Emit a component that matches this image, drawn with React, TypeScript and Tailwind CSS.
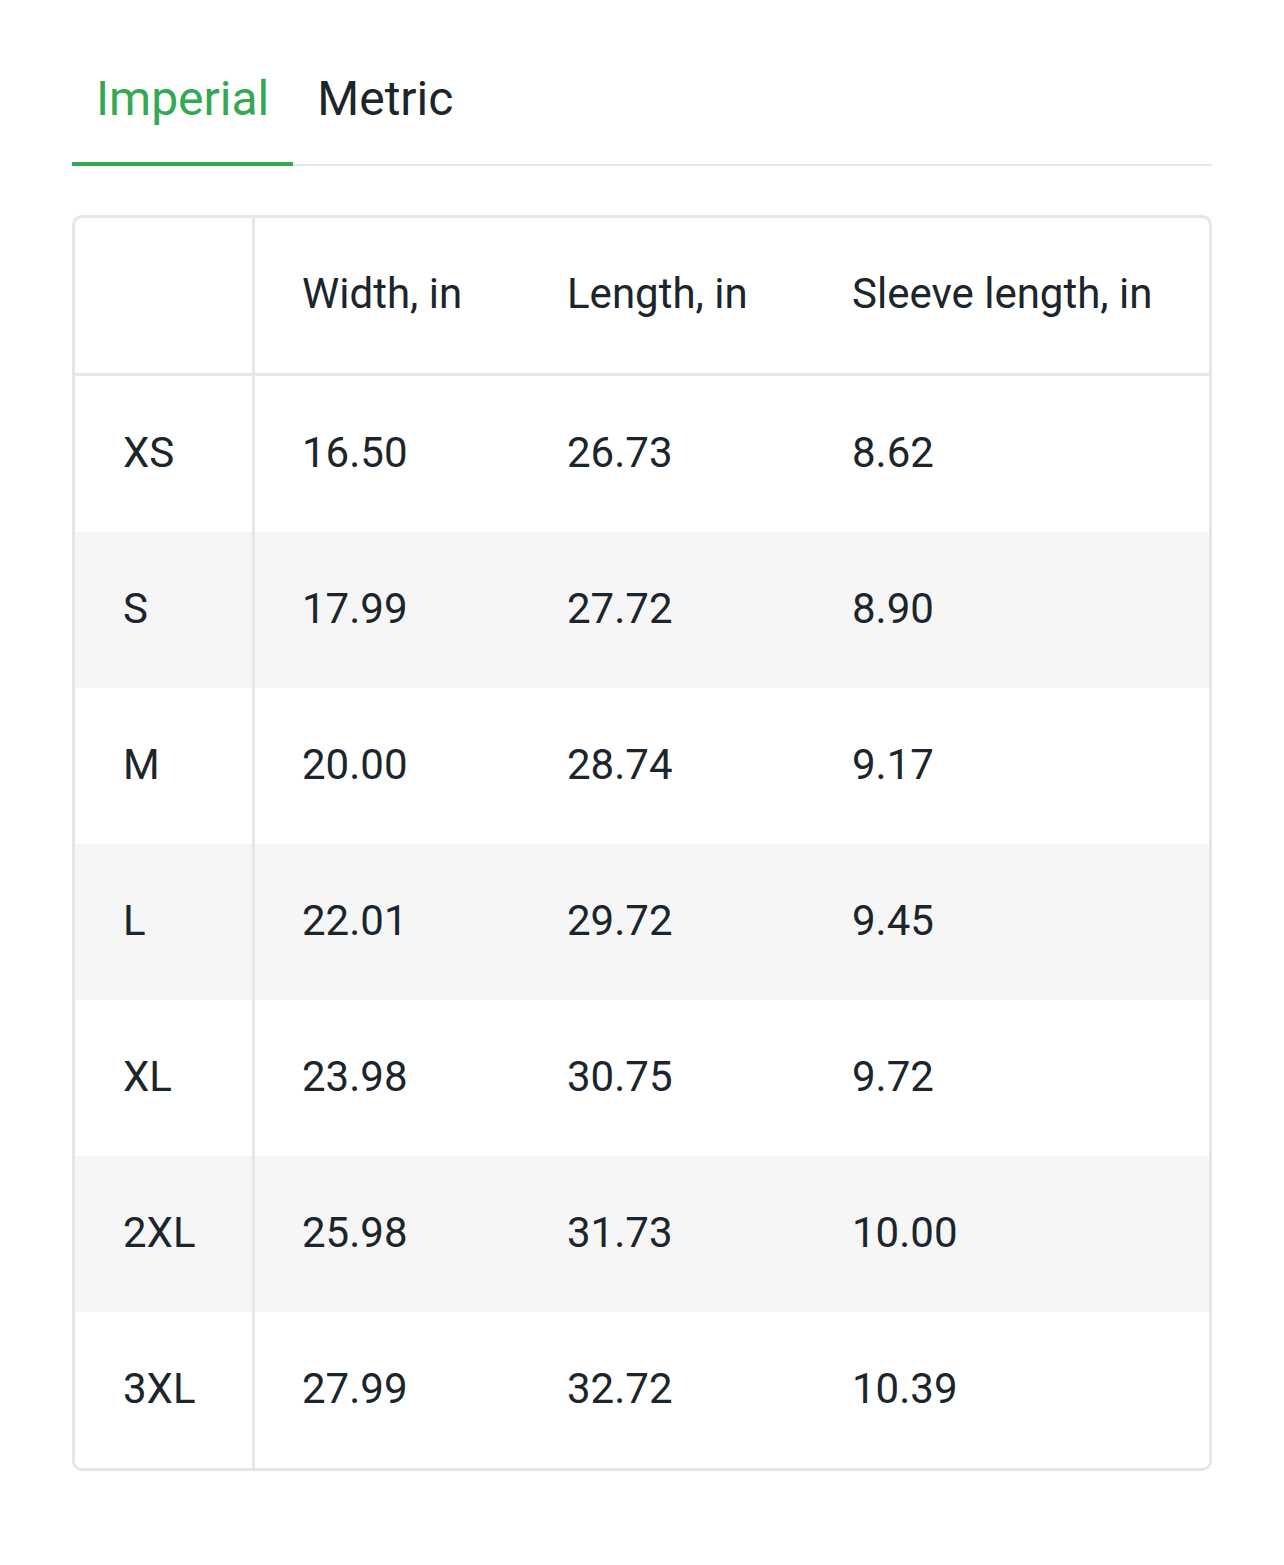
import React from "react";

const rows: [string, string, string, string][] = [
  ["XS", "16.50", "26.73", "8.62"],
  ["S", "17.99", "27.72", "8.90"],
  ["M", "20.00", "28.74", "9.17"],
  ["L", "22.01", "29.72", "9.45"],
  ["XL", "23.98", "30.75", "9.72"],
  ["2XL", "25.98", "31.73", "10.00"],
  ["3XL", "27.99", "32.72", "10.39"],
];

export default function App() {
  return (
    <div
      className="min-h-[1565px] w-full bg-white px-[72px] text-[#1b252b]"
      style={{ fontFamily: "Roboto, 'Noto Sans', sans-serif" }}
    >
      <div className="flex border-b-2 border-[#e6e6e6] pt-[34px]">
        <div className="relative flex h-[130px] items-center px-[24px] text-[48px] text-[#34a853]">
          Imperial
          <div className="absolute bottom-[-2px] left-0 right-0 h-[4px] bg-[#34a853]" />
        </div>
        <div className="flex h-[130px] items-center px-[24px] text-[48px] text-[#1b252b]">
          Metric
        </div>
      </div>

      <div className="mt-[49px] overflow-hidden rounded-[10px] border-[3px] border-[#e6e6e6] text-[42px]">
        <div className="grid h-[158px] grid-cols-[180px_265px_285px_1fr] border-b-[3px] border-[#e6e6e6]">
          <div className="border-r-[3px] border-[#e6e6e6]" />
          <div className="flex items-center pb-[4px] pl-[47px]">Width, in</div>
          <div className="flex items-center pb-[4px] pl-[47px]">Length, in</div>
          <div className="flex items-center pb-[4px] pl-[47px]">Sleeve length, in</div>
        </div>
        {rows.map((r, i) => (
          <div
            key={r[0]}
            className={
              "grid h-[156px] grid-cols-[180px_265px_285px_1fr] " +
              (i % 2 === 1 ? "bg-[#f6f6f6]" : "bg-white")
            }
          >
            <div className="flex items-center border-r-[3px] border-[#e6e6e6] pb-[4px] pl-[48px]">
              {r[0]}
            </div>
            <div className="flex items-center pb-[4px] pl-[47px]">{r[1]}</div>
            <div className="flex items-center pb-[4px] pl-[47px]">{r[2]}</div>
            <div className="flex items-center pb-[4px] pl-[47px]">{r[3]}</div>
          </div>
        ))}
      </div>
    </div>
  );
}
